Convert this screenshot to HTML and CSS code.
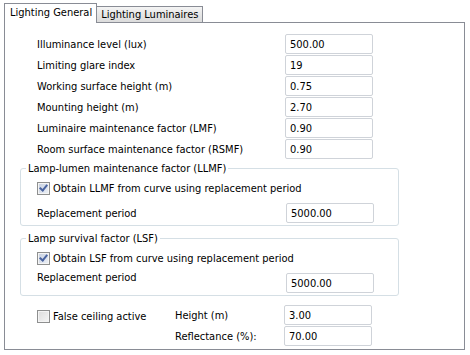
FILE: index.html
```html
<!DOCTYPE html>
<html lang="en">
<head>
  <meta charset="UTF-8">
  <title>Lighting General</title>
  <link rel="stylesheet" href="styles.css">
</head>
<body>
  <div class="tabs">
    <div class="tab active">Lighting General</div>
    <div class="tab">Lighting Luminaires</div>
  </div>
  <div class="panel">
    <div class="fields">
      <span>Illuminance level (lux)</span><input class="box" value="500.00">
      <span>Limiting glare index</span><input class="box" value="19">
      <span>Working surface height (m)</span><input class="box" value="0.75">
      <span>Mounting height (m)</span><input class="box" value="2.70">
      <span>Luminaire maintenance factor (LMF)</span><input class="box" value="0.90">
      <span>Room surface maintenance factor (RSMF)</span><input class="box" value="0.90">
    </div>

    <fieldset class="group">
      <legend>Lamp-lumen maintenance factor (LLMF)</legend>
      <div class="check-row"><span class="check on"></span>Obtain LLMF from curve using replacement period</div>
      <div class="fields inner">
        <span>Replacement period</span><input class="box" value="5000.00">
      </div>
    </fieldset>

    <fieldset class="group second">
      <legend>Lamp survival factor (LSF)</legend>
      <div class="check-row"><span class="check on"></span>Obtain LSF from curve using replacement period</div>
      <div class="fields inner top">
        <span>Replacement period</span><input class="box" value="5000.00">
      </div>
    </fieldset>

    <div class="ceiling">
      <div class="check-row"><span class="check"></span>False ceiling active</div>
      <div class="ceiling-fields">
        <span>Height (m)</span><input class="box" value="3.00">
        <span>Reflectance (%):</span><input class="box" value="70.00">
      </div>
    </div>
  </div>
</body>
</html>
```

FILE: styles.css
```css
body {
  margin: 0;
  padding: 3px 5px 0 4px;
  background: #fff;
  font-family: "DejaVu Sans Condensed", "DejaVu Sans", sans-serif;
  font-size: 11px;
  color: #000;
}

.tabs {
  display: flex;
  align-items: flex-end;
  height: 19px;
}

.tab {
  box-sizing: border-box;
  border: 1px solid #898c95;
  border-bottom: none;
  padding: 0 4px;
  line-height: 15px;
}

.tab.active {
  position: relative;
  z-index: 1;
  height: 20px;
  margin-bottom: -1px;
  padding: 1px 4px 0 5px;
  background: #fff;
}

.tab:not(.active) {
  height: 16px;
  border-left: none;
  background: linear-gradient(#f4f4f4, #e6e6e6 50%, #dcdcdc);
}

.panel {
  box-sizing: border-box;
  width: 461px;
  height: 328px;
  border: 1px solid #898c95;
  padding: 11px 0 0 0;
}

.fields {
  display: grid;
  grid-template-columns: 248px 88px;
  grid-auto-rows: 20px;
  row-gap: 1px;
  align-items: center;
  padding-left: 32px;
}

.box {
  box-sizing: border-box;
  width: 88px;
  height: 20px;
  margin: 0;
  border: 1px solid #cfd3d9;
  border-radius: 2px;
  padding: 0 4px;
  font: inherit;
  color: #000;
  background: #fff;
}

.group {
  box-sizing: border-box;
  width: 379px;
  height: 64px;
  margin: 3px 0 0 15px;
  padding: 0;
  border: 1px solid #d5dfe5;
  border-radius: 3px;
}

.group legend {
  margin-left: 5px;
  padding: 0 2px;
  line-height: 13px;
}

.group.second {
  margin-top: 6px;
}

.check-row {
  display: flex;
  align-items: center;
  gap: 3px;
  height: 15px;
  margin: 6px 0 0 16px;
}

.check {
  box-sizing: border-box;
  width: 13px;
  height: 13px;
  border: 1px solid #8e8f8f;
  background: linear-gradient(135deg, #dcdcdc, #f6f6f6);
  box-shadow: inset 0 0 0 1px #f4f4f4;
}

.check.on {
  background: linear-gradient(135deg, #c5cfe0, #eef1f6);
  position: relative;
}

.check.on::after {
  content: "";
  position: absolute;
  left: 3px;
  top: 0;
  width: 3px;
  height: 6px;
  border: solid #4a64a0;
  border-width: 0 2px 2px 0;
  transform: rotate(40deg);
}

.fields.inner {
  grid-template-columns: 249px 87px;
  padding-left: 16px;
  margin-top: 7px;
}

.fields.inner.top span {
  align-self: start;
  margin-top: -2px;
}

.ceiling {
  display: flex;
  align-items: flex-start;
  margin-top: 9px;
  padding-left: 32px;
}

.ceiling .check-row {
  margin: 4px 0 0 0;
  width: 138px;
}

.ceiling-fields {
  display: grid;
  grid-template-columns: 109px 87px;
  grid-auto-rows: 20px;
  row-gap: 1px;
  align-items: center;
}
```
